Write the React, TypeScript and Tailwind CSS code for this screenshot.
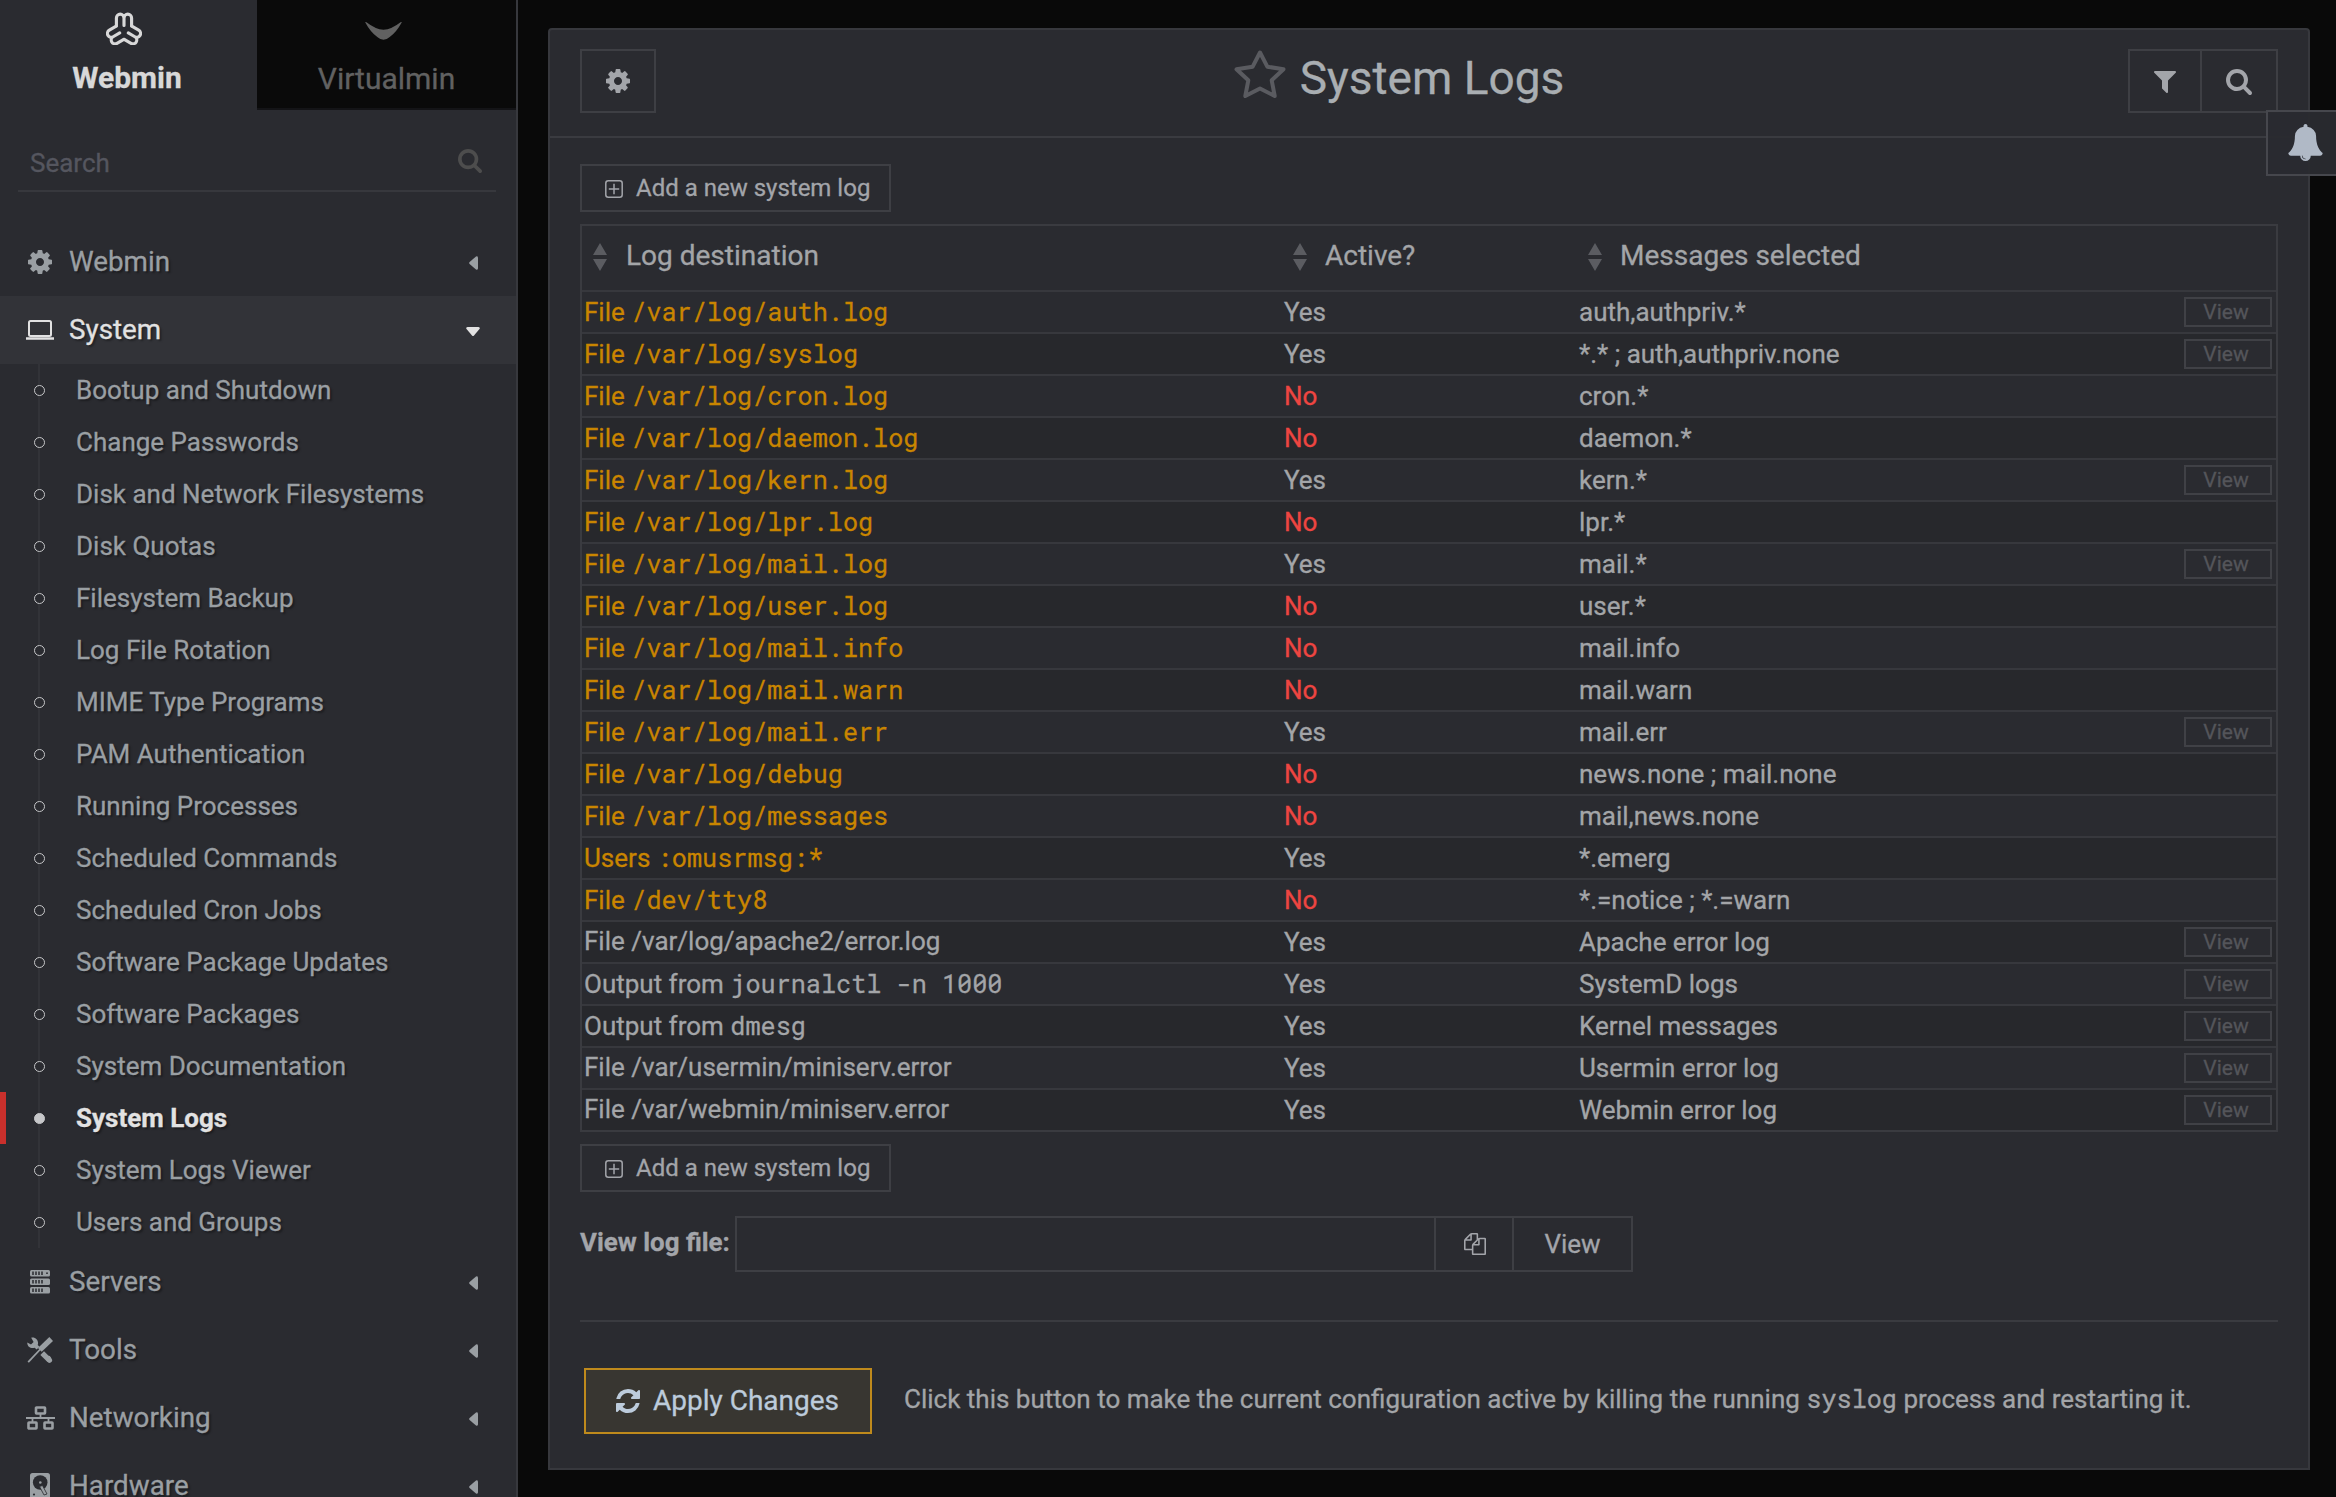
import React from "react";

type IconProps = { className?: string };

const CogIcon = ({ className }: IconProps) => (
  <svg className={className} viewBox="0 -128 1536 1536" fill="currentColor">
    <path d="M1024 640q0 106-75 181t-181 75-181-75-75-181 75-181 181-75 181 75 75 181zM1536 749v-222q0-12-8-23t-20-13l-185-28q-19-54-39-91 35-50 107-138 10-12 10-25t-9-23q-27-37-99-108t-94-71q-12 0-26 9l-138 108q-44-23-91-38-16-136-29-186-7-28-36-28h-222q-14 0-24.5 8.5t-11.5 21.5l-28 184q-49 16-90 37l-141-107q-10-9-25-9-14 0-25 11-126 114-165 168-7 10-7 23 0 12 8 23 15 21 51 66.5t54 70.5q-27 50-41 99l-183 27q-13 2-21 12.5t-8 23.5v222q0 12 8 23t19 13l186 28q14 46 39 92-40 57-107 138-10 12-10 24 0 10 9 23 26 36 98.5 107.5t94.5 71.5q13 0 26-10l138-107q44 23 91 38 16 136 29 186 7 28 36 28h222q14 0 24.5-8.5t11.5-21.5l28-184q49-16 90-37l142 107q9 9 24 9 13 0 25-10 129-119 165-170 7-8 7-22 0-12-8-23-15-21-51-66.5t-54-70.5q26-50 41-98l183-28q13-2 21-12.5t8-23.5z" />
  </svg>
);

const FilterIcon = ({ className }: IconProps) => (
  <svg className={className} viewBox="0 256 1408 1408" fill="currentColor">
    <path d="M1403 295q17 41-14 70l-493 493v742q0 42-39 59-13 5-25 5-27 0-45-19l-256-256q-19-19-19-45v-486l-493-493q-31-29-14-70 17-39 59-39h1280q42 0 59 39z" />
  </svg>
);

const SearchIcon = ({ className }: IconProps) => (
  <svg className={className} viewBox="64 128 1664 1664" fill="currentColor">
    <path d="M1216 832q0-185-131.5-316.5t-316.5-131.5-316.5 131.5-131.5 316.5 131.5 316.5 316.5 131.5 316.5-131.5 131.5-316.5zm512 832q0 52-38 90t-90 38q-54 0-90-38l-343-342q-179 124-399 124-143 0-273.5-55.5t-225-150-150-225-55.5-273.5 55.5-273.5 150-225 225-150 273.5-55.5 273.5 55.5 225 150 150 225 55.5 273.5q0 220-124 399l343 343q37 37 37 90z" />
  </svg>
);

const BellIcon = ({ className }: IconProps) => (
  <svg className={className} viewBox="0 0 1792 1792" fill="currentColor">
    <path d="M912 1696q0-16-16-16-59 0-101.5-42.5t-42.5-101.5q0-16-16-16t-16 16q0 73 51.5 124.500t124.500 51.500q16 0 16-16zm816-288q0 52-38 90t-90 38h-448q0 106-75 181t-181 75-181-75-75-181h-448q-52 0-90-38t-38-90q50-42 91-88t85-119.500 74.500-158.500 50-206 19.500-260q0-152 117-282.500t307-158.500q-8-19-8-39 0-40 28-68t68-28 68 28 28 68q0 20-8 39 190 28 307 158.500t117 282.500q0 139 19.500 260t50 206 74.500 158.500 85 119.500 91 88z" />
  </svg>
);

const RefreshIcon = ({ className }: IconProps) => (
  <svg className={className} viewBox="128 128 1536 1536" fill="currentColor">
    <path d="M1639 1056q0 5-1 7-64 268-268 434.5t-478 166.500q-146 0-282.500-55t-243.500-157l-129 129q-19 19-45 19t-45-19-19-45v-448q0-26 19-45t45-19h448q26 0 45 19t19 45-19 45l-137 137q71 66 161 102t187 36q134 0 250-65t186-179q11-17 53-117 8-23 30-23h192q13 0 22.500 9.500t9.500 22.500zm25-800v448q0 26-19 45t-45 19h-448q-26 0-45-19t-19-45 19-45l138-138q-148-137-349-137-134 0-250 65t-186 179q-11 17-53 117-8 23-30 23h-199q-13 0-22.500-9.500t-9.500-22.500v-7q65-268 270-434.500t480-166.500q146 0 284 55.500t245 156.500l130-129q19-19 45-19t45 19 19 45z" />
  </svg>
);

const FilesIcon = ({ className }: IconProps) => (
  <svg className={className} viewBox="0 0 1792 1792" fill="currentColor">
    <path d="M1696 384q40 0 68 28t28 68v1216q0 40-28 68t-68 28h-960q-40 0-68-28t-28-68v-288h-544q-40 0-68-28t-28-68v-672q0-40 20-88t48-76l408-408q28-28 76-48t88-20h416q40 0 68 28t28 68v328q68-40 128-40h416zm-544 213l-299 299h299v-299zm-640-384l-299 299h299v-299zm196 647l316-316v-416h-384v416q0 40-28 68t-68 28h-416v640h512v-256q0-40 20-88t48-76zm956 804v-1152h-384v416q0 40-28 68t-68 28h-416v640h896z" />
  </svg>
);

const StarIcon = ({ className }: IconProps) => (
  <svg className={className} viewBox="0 0 52 50" fill="none" stroke="currentColor" strokeWidth="4" strokeLinejoin="round">
    <path d="M26 3.500L33.300 17.700L49.500 20.300L37.700 31.300L40.700 47L26 39.500L11.300 47L14.300 31.300L2.500 20.300L18.700 17.700Z" />
  </svg>
);

const WebminLogo = ({ className }: IconProps) => (
  <svg className={className} viewBox="-54 -56 108 100" fill="none" stroke="currentColor" strokeWidth="9.500" strokeLinecap="round" strokeLinejoin="round">
    {[0, 120, 240].map((a) => (
      <path key={a} transform={`rotate(${a})`} d="M-23 -14V-38A11.500 11.500 0 0 1 0 -38A11.500 11.500 0 0 1 23 -38V-14M0 -38V-15" />
    ))}
  </svg>
);

const VirtualminLogo = ({ className }: IconProps) => (
  <svg className={className} viewBox="0 0 112 55" fill="currentColor">
    <path d="M0 1Q1 -1 4 1Q32 23 56 24Q80 23 108 1Q111 -1 112 1Q96 31 75 46Q56 63 37 46Q16 31 0 1Z" />
  </svg>
);

const LaptopIcon = ({ className }: IconProps) => (
  <svg className={className} viewBox="0 0 28 20" fill="none" stroke="currentColor">
    <rect x="3" y="1" width="22" height="15" rx="1.500" strokeWidth="2" />
    <path d="M0 18.500H28" strokeWidth="2.500" />
  </svg>
);

const ServersIcon = ({ className }: IconProps) => (
  <svg className={className} viewBox="0 0 20 24">
    {[0, 8.500, 17].map((y) => (
      <g key={y}>
        <rect x="0" y={y} width="20" height="6.500" rx="1.500" fill="currentColor" />
        <path d={`M3 ${y + 1.500}v3.500M6 ${y + 1.500}v3.500M9 ${y + 1.500}v3.500M12 ${y + 1.500}v3.500`} stroke="#2a2b30" strokeWidth="1.500" />
      </g>
    ))}
    <circle cx="17" cy="3.200" r="0.900" fill="#2a2b30" />
  </svg>
);

const ToolsIcon = ({ className }: IconProps) => (
  <svg className={className} viewBox="0 0 26 26" fill="none" stroke="currentColor">
    <path d="M15.200 16.200L22.300 23.200" strokeWidth="5.200" />
    <path d="M21.500 21.500L22.500 23.200" strokeWidth="5.200" strokeLinecap="round" />
    <path d="M24.200 2L12.800 12.900" strokeWidth="5.400" />
    <path d="M14 11.500L1.200 25.200" strokeWidth="1.800" />
    <path d="M0.300 5.500L4 7.600L6.600 5L4.200 0.700C9 -0.300 12.200 4.200 10.700 8L12.500 9.800L9.600 12.400L7.700 10.700C3.800 12 0 9.400 0.300 5.500Z" fill="currentColor" stroke="none" />
  </svg>
);

const NetworkIcon = ({ className }: IconProps) => (
  <svg className={className} viewBox="0 0 29 24" fill="none" stroke="currentColor">
    <rect x="10" y="1.500" width="9" height="6" rx="0.500" strokeWidth="2.600" />
    <rect x="2.500" y="16.500" width="8" height="6" rx="0.500" strokeWidth="2.600" />
    <rect x="18.500" y="16.500" width="8" height="6" rx="0.500" strokeWidth="2.600" />
    <path d="M0 12H29M14.500 8V12M6.500 12V16M22.500 12V16" strokeWidth="1.800" />
  </svg>
);

const DiskIcon = ({ className }: IconProps) => (
  <svg className={className} viewBox="0 0 20 26">
    <rect width="20" height="26" rx="2.500" fill="currentColor" />
    <circle cx="10.200" cy="9.500" r="7.300" fill="#2a2b30" />
    <path d="M9.500 13.500L12.500 12.500L17 21L14 22Z" fill="currentColor" stroke="#2a2b30" strokeWidth="0.800" />
    <circle cx="10.300" cy="9.500" r="1.300" fill="currentColor" />
    <circle cx="4" cy="21.500" r="1.100" fill="#2a2b30" />
  </svg>
);

const PlusSquareIcon = ({ className }: IconProps) => (
  <svg className={className} viewBox="0 0 18 18" fill="none" stroke="currentColor" strokeWidth="1.500">
    <rect x="0.800" y="0.800" width="16.400" height="16.400" rx="2.500" />
    <path d="M9 3.800V14.200M3.800 9H14.200" />
  </svg>
);

const CaretLeft = () => (
  <svg className="h-3.5 w-[9px]" viewBox="0 0 9 14" fill="currentColor">
    <path d="M9 1.500V12.500Q8.500 14.500 7 13.500L0.600 8Q-0.400 7 0.600 6L7 0.500Q8.500 -0.500 9 1.500Z" />
  </svg>
);

const CaretDown = () => (
  <svg className="h-[9px] w-3.5" viewBox="0 0 14 9" fill="currentColor">
    <path d="M1.500 0H12.500Q14.500 0.500 13.500 2L8 8.400Q7 9.400 6 8.400L0.500 2Q-0.500 0.500 1.500 0Z" />
  </svg>
);

const SortIcon = () => (
  <svg className="h-7 w-3.5 text-[#5b5c61]" viewBox="0 0 14 28" fill="currentColor">
    <path d="M7 0L14 12H0ZM0 16H14L7 28Z" />
  </svg>
);

const systemItems = [
  "Bootup and Shutdown", "Change Passwords", "Disk and Network Filesystems", "Disk Quotas",
  "Filesystem Backup", "Log File Rotation", "MIME Type Programs", "PAM Authentication",
  "Running Processes", "Scheduled Commands", "Scheduled Cron Jobs", "Software Package Updates",
  "Software Packages", "System Documentation", "System Logs", "System Logs Viewer", "Users and Groups",
];

type Row = { pre: string; mono?: string; link?: boolean; active: boolean; msg: string; view?: boolean };

const rows: Row[] = [
  { pre: "File ", mono: "/var/log/auth.log", link: true, active: true, msg: "auth,authpriv.*", view: true },
  { pre: "File ", mono: "/var/log/syslog", link: true, active: true, msg: "*.* ; auth,authpriv.none", view: true },
  { pre: "File ", mono: "/var/log/cron.log", link: true, active: false, msg: "cron.*" },
  { pre: "File ", mono: "/var/log/daemon.log", link: true, active: false, msg: "daemon.*" },
  { pre: "File ", mono: "/var/log/kern.log", link: true, active: true, msg: "kern.*", view: true },
  { pre: "File ", mono: "/var/log/lpr.log", link: true, active: false, msg: "lpr.*" },
  { pre: "File ", mono: "/var/log/mail.log", link: true, active: true, msg: "mail.*", view: true },
  { pre: "File ", mono: "/var/log/user.log", link: true, active: false, msg: "user.*" },
  { pre: "File ", mono: "/var/log/mail.info", link: true, active: false, msg: "mail.info" },
  { pre: "File ", mono: "/var/log/mail.warn", link: true, active: false, msg: "mail.warn" },
  { pre: "File ", mono: "/var/log/mail.err", link: true, active: true, msg: "mail.err", view: true },
  { pre: "File ", mono: "/var/log/debug", link: true, active: false, msg: "news.none ; mail.none" },
  { pre: "File ", mono: "/var/log/messages", link: true, active: false, msg: "mail,news.none" },
  { pre: "Users ", mono: ":omusrmsg:*", link: true, active: true, msg: "*.emerg" },
  { pre: "File ", mono: "/dev/tty8", link: true, active: false, msg: "*.=notice ; *.=warn" },
  { pre: "File /var/log/apache2/error.log", active: true, msg: "Apache error log", view: true },
  { pre: "Output from ", mono: "journalctl -n 1000", active: true, msg: "SystemD logs", view: true },
  { pre: "Output from ", mono: "dmesg", active: true, msg: "Kernel messages", view: true },
  { pre: "File /var/usermin/miniserv.error", active: true, msg: "Usermin error log", view: true },
  { pre: "File /var/webmin/miniserv.error", active: true, msg: "Webmin error log", view: true },
];

const Mono = ({ children }: { children: React.ReactNode }) => (
  <span className="font-['Roboto_Mono','DejaVu_Sans_Mono',monospace] text-[25.200px]">{children}</span>
);

function MenuRow({ icon, label, open }: { icon: React.ReactNode; label: string; open?: boolean }) {
  return (
    <div className={`flex h-[68px] shrink-0 items-center pr-9 pl-[25px] text-[27.800px] ${open ? "bg-[#323338] text-[#e2e2e2]" : "text-[#9a9fa3]"}`}>
      <span className="flex w-[30px] justify-center">{icon}</span>
      <span className="ml-3.5 grow">{label}</span>
      <span className="mt-0.5 flex w-3.5 justify-center">{open ? <CaretDown /> : <CaretLeft />}</span>
    </div>
  );
}

function Sidebar() {
  return (
    <aside className="flex w-[518px] shrink-0 flex-col overflow-hidden border-r-2 border-[#37383d] bg-[#2a2b30]">
      <div className="flex h-[110px] shrink-0 leading-none">
        <div className="flex w-[257px] flex-col items-center text-[#d8d8d8]">
          <WebminLogo className="mt-3 mr-2.5 h-[33px] w-9" />
          <span className="mt-[18px] mr-[3px] text-[30px] font-bold">Webmin</span>
        </div>
        <div className="flex grow flex-col items-center border-b-2 border-[#141417] bg-[#0a0a0a] text-[#616161]">
          <VirtualminLogo className="mt-[22px] mr-[7px] h-[18px] w-[37px]" />
          <span className="mt-6 text-[30px]">Virtualmin</span>
        </div>
      </div>
      <div className="mt-6 mr-5 mb-9 ml-[18px] flex h-[58px] shrink-0 items-center justify-between border-b-2 border-[#37383d] pr-3.5 pl-3 text-[26px] text-[#55565f]">
        <span className="mt-0.5">Search</span>
        <SearchIcon className="mb-0.5 size-6 text-[#4d4d4d]" />
      </div>
      <nav className="flex flex-col [text-shadow:2px_2px_2px_rgba(0,0,0,0.35)]">
        <MenuRow icon={<CogIcon className="size-6" />} label="Webmin" />
        <MenuRow icon={<LaptopIcon className="h-5 w-7" />} label="System" open />
        <ul>
          {systemItems.map((item) => {
            const on = item === "System Logs";
            return (
              <li key={item} className={`flex h-[52px] border-l-[6px] text-[26px] ${on ? "border-[#c9302c] font-bold text-[#e2e2e2]" : "border-transparent text-[#9a9fa3]"}`}>
                <span className="ml-[26px] flex w-3.5 flex-col items-center">
                  <span className="w-0.5 grow bg-[#323338]" />
                  <span className={`size-[11px] rounded-full border-[1.500px] border-[#c6c7c9] ${on ? "bg-[#c6c7c9]" : ""}`} />
                  <span className="w-0.5 grow bg-[#323338]" />
                </span>
                <span className="ml-[30px] leading-[52px]">{item}</span>
              </li>
            );
          })}
        </ul>
        <MenuRow icon={<ServersIcon className="h-6 w-5" />} label="Servers" />
        <MenuRow icon={<ToolsIcon className="size-[26px]" />} label="Tools" />
        <MenuRow icon={<NetworkIcon className="h-6 w-[29px]" />} label="Networking" />
        <MenuRow icon={<DiskIcon className="h-[26px] w-5" />} label="Hardware" />
      </nav>
    </aside>
  );
}

const AddButton = () => (
  <button className="flex h-12 w-[311px] items-center border-2 border-[#3e3f44] pl-[23px] text-[24px] text-[#a3a5aa]">
    <PlusSquareIcon className="mt-0.5 size-[18px]" />
    <span className="ml-[13px] leading-none">Add a new system log</span>
  </button>
);

const columns = "grid grid-cols-[702px_295px_1fr_auto] items-center";

function LogTable() {
  return (
    <div className="mt-3 border-2 border-[#3a3b40] text-[#a3a5a8]">
      <div className={`${columns} h-[66px] border-b-2 border-[#37383d] text-[28px]`}>
        {["Log destination", "Active?", "Messages selected"].map((h, i) => (
          <div key={h} className={`-mt-1 flex items-center ${i ? "pl-[9px]" : "pl-[11px]"}`}>
            <span className="mt-0.5"><SortIcon /></span>
            <span className={i ? "ml-[18px]" : "ml-[19px]"}>{h}</span>
          </div>
        ))}
      </div>
      {rows.map((r, i) => (
        <div key={i} className={`${columns} border-[#37383d] text-[26px] leading-[39px] ${i < rows.length - 1 ? "h-[42px] border-b-2" : "h-10"} ${i % 2 ? "bg-[#27282c]" : ""}`}>
          <div className={`h-10 pl-0.5 whitespace-pre ${r.link ? "text-[#c98500]" : ""}`}>
            {r.pre}
            {r.mono && <Mono>{r.mono}</Mono>}
          </div>
          <div className={`h-10 leading-[41px] ${r.active ? "" : "text-[#ee4541]"}`}>{r.active ? "Yes" : "No"}</div>
          <div className="h-10 leading-[41px]">{r.msg}</div>
          {r.view && (
            <button className="mr-1 h-[30px] w-[88px] border-2 border-[#404146] bg-[#2a2b30] pr-1 text-[21px] leading-[26px] text-[#54555a]">View</button>
          )}
        </div>
      ))}
    </div>
  );
}

export default function App() {
  return (
    <div className="relative flex h-[1497px] w-[2336px] overflow-hidden bg-[#090909] font-['Roboto',sans-serif] [-webkit-text-stroke:0.300px]">
      <Sidebar />
      <main className="mt-7 ml-[30px] flex h-[1442px] w-[1762px] flex-col rounded-t border-2 border-[#37383d] bg-[#2a2b30]">
        <header className="flex h-[108px] shrink-0 items-start justify-between border-b-2 border-[#3a3b40] px-[30px] pt-[19px]">
          <div className="flex h-16 w-[150px]">
            <button className="flex w-[76px] items-center justify-center border-2 border-[#3e3f44] text-[#a3a5aa]">
              <CogIcon className="size-6" />
            </button>
          </div>
          <h1 className="mr-[60px] flex items-start text-[46px] leading-none text-[#a9aeb2]">
            <StarIcon className="h-[50px] w-[52px] text-[#5a5b60]" />
            <span className="mt-1.5 ml-3.5">System Logs</span>
          </h1>
          <div className="flex h-16 w-[150px] border-2 border-[#3e3f44] text-[#a3a5aa]">
            <button className="flex w-[72px] items-center justify-center border-r-2 border-[#3e3f44]">
              <FilterIcon className="mt-0.5 size-[22px]" />
            </button>
            <button className="flex grow items-center justify-center">
              <SearchIcon className="mt-0.5 size-[26px]" />
            </button>
          </div>
        </header>
        <section className="flex flex-col px-[30px] pt-[26px]">
          <AddButton />
          <LogTable />
          <div className="mt-3"><AddButton /></div>
          <div className="mt-6 flex h-14 items-center text-[26px] text-[#a3a5aa]">
            <span className="mb-1 w-[155px] text-[25.900px] font-bold">View log file:</span>
            <div className="flex h-14 w-[898px] border-2 border-[#3e3f44]">
              <div className="w-[697px]" />
              <button className="flex w-[80px] items-center justify-center border-x-2 border-[#3e3f44] pl-px">
                <FilesIcon className="size-[22px]" />
              </button>
              <button className="grow">View</button>
            </div>
          </div>
          <hr className="mt-12 border-0 border-t-2 border-[#3a3b40]" />
          <div className="mt-[46px] ml-1 flex h-[66px] items-center">
            <button className="flex h-[66px] w-[288px] items-center border-2 border-[#bf8a1c] bg-[#383631] pl-[30px] text-[28px] text-[#bccbdb]">
              <RefreshIcon className="size-6" />
              <span className="ml-[13px]">Apply Changes</span>
            </button>
            <p className="mb-1 ml-8 text-[26px] whitespace-nowrap text-[#a3a5a8]">
              Click this button to make the current configuration active by killing the running <Mono>syslog</Mono> process and restarting it.
            </p>
          </div>
        </section>
      </main>
      <div className="absolute top-[110px] right-0 flex h-[66px] w-[70px] items-center border-2 border-r-0 border-[#46474d] bg-[#2a2b30f5] pb-px pl-[19px]">
        <BellIcon className="size-[37px] text-[#b0b9c6]" />
      </div>
    </div>
  );
}
